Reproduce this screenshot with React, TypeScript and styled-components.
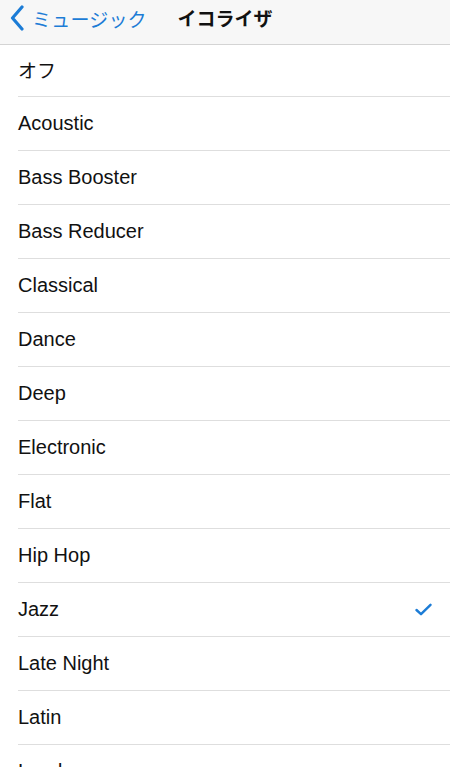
import React from 'react';
import styled, { createGlobalStyle } from 'styled-components';

const GlobalStyle = createGlobalStyle`
  html, body {
    margin: 0;
    padding: 0;
    background: #ffffff;
  }
  body {
    font-family: 'Liberation Sans', 'Noto Sans CJK JP', sans-serif;
    overflow: hidden;
  }
`;

const Screen = styled.div`
  width: 450px;
  height: 767px;
  overflow: hidden;
  background: #ffffff;
`;

const NavBar = styled.header`
  display: flex;
  align-items: center;
  height: 44px;
  position: relative;
  background: #f7f7f7;
  border-bottom: 1px solid #d4d4d4;
`;

const BackButton = styled.a`
  display: flex;
  align-items: center;
  gap: 8px;
  padding: 0 0 0 10px;
  height: 100%;
  color: #1c7cd6;
  font-family: 'Noto Sans CJK JP', sans-serif;
  font-size: 19px;
  letter-spacing: 0.2px;
  text-decoration: none;
  padding-bottom: 8px;
  box-sizing: border-box;
`;

const NavTitle = styled.h1`
  position: absolute;
  left: 0;
  right: 0;
  top: 0;
  margin: 0;
  height: 36px;
  line-height: 36px;
  text-align: center;
  pointer-events: none;
  font-family: 'Noto Sans CJK JP', sans-serif;
  font-size: 19px;
  font-weight: 700;
  color: #111111;
`;

const List = styled.ul`
  list-style: none;
  margin: 0;
  padding: 0 0 0 18px;
`;

const Row = styled.li`
  display: flex;
  align-items: center;
  justify-content: space-between;
  height: 53px;
  padding-right: 18px;
  border-bottom: 1px solid #dedede;
  font-size: 20px;
  color: #111111;

  &:first-child {
    height: 51px;
  }
`;

const Label = styled.span<{ $cjk?: boolean }>`
  font-family: ${(p) =>
    p.$cjk ? "'Noto Sans CJK JP', sans-serif" : "'Liberation Sans', sans-serif"};
  font-size: ${(p) => (p.$cjk ? '19px' : '20px')};
  padding-bottom: ${(p) => (p.$cjk ? '3px' : '0')};
`;

const Chevron = () => (
  <svg width="14" height="26" viewBox="0 0 14 26" fill="none">
    <path d="M12 2 L2.5 13 L12 24" stroke="#1c7cd6" strokeWidth="3.2" strokeLinecap="round" strokeLinejoin="round" />
  </svg>
);

const Check = () => (
  <svg width="17" height="13" viewBox="0 0 17 13" fill="none">
    <path d="M1.5 7 L6 11.2 L15.5 1.8" stroke="#1c7cd6" strokeWidth="2.4" strokeLinecap="round" strokeLinejoin="round" />
  </svg>
);

const presets = [
  'オフ',
  'Acoustic',
  'Bass Booster',
  'Bass Reducer',
  'Classical',
  'Dance',
  'Deep',
  'Electronic',
  'Flat',
  'Hip Hop',
  'Jazz',
  'Late Night',
  'Latin',
  'Loudness',
];

const selected = 'Jazz';

export default function App() {
  return (
    <Screen>
      <GlobalStyle />
      <NavBar>
        <BackButton href="#">
          <Chevron />
          ミュージック
        </BackButton>
        <NavTitle>イコライザ</NavTitle>
      </NavBar>
      <List>
        {presets.map((name) => (
          <Row key={name}>
            <Label $cjk={name === 'オフ'}>{name}</Label>
            {name === selected && <Check />}
          </Row>
        ))}
      </List>
    </Screen>
  );
}
